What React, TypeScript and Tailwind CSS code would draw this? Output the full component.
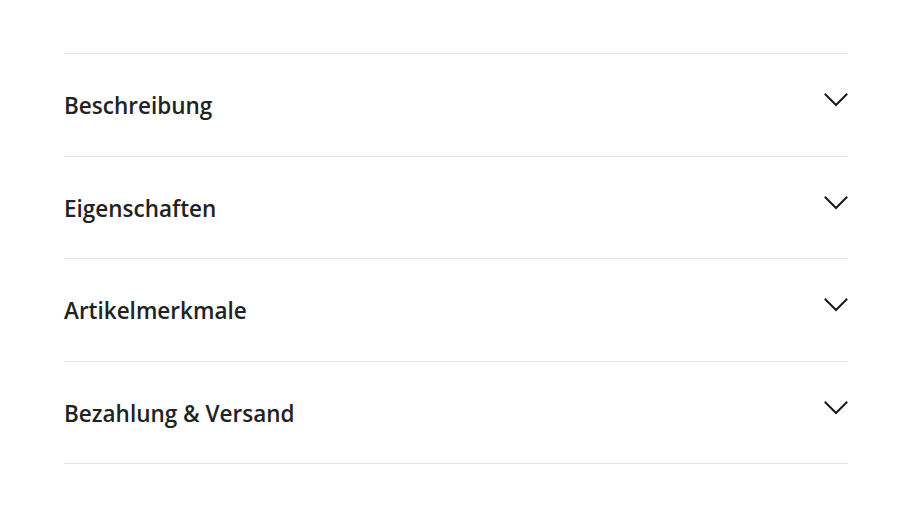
const items = ["Beschreibung", "Eigenschaften", "Artikelmerkmale", "Bezahlung & Versand"];

function Chevron() {
  return (
    <svg width="24" height="14" viewBox="0 0 24 14" fill="none" className="mt-[3px] shrink-0">
      <path d="M1.5 1.5 L12 12 L22.5 1.5" stroke="#1a1a1a" strokeWidth="2" strokeLinecap="square" strokeLinejoin="miter" />
    </svg>
  );
}

export default function App() {
  return (
    <div className="min-h-[512px] bg-white pt-[53px] font-['Open_Sans',sans-serif]">
      <div className="ml-[64px] w-[784px] border-t border-[#e6e6e6]">
        {items.map((label) => (
          <div key={label} className="flex items-start justify-between border-b border-[#e6e6e6] pt-[36px] pb-[33.5px]">
            <span className="text-[22.5px] leading-[32px] font-semibold text-[#222222]">{label}</span>
            <Chevron />
          </div>
        ))}
      </div>
    </div>
  );
}
